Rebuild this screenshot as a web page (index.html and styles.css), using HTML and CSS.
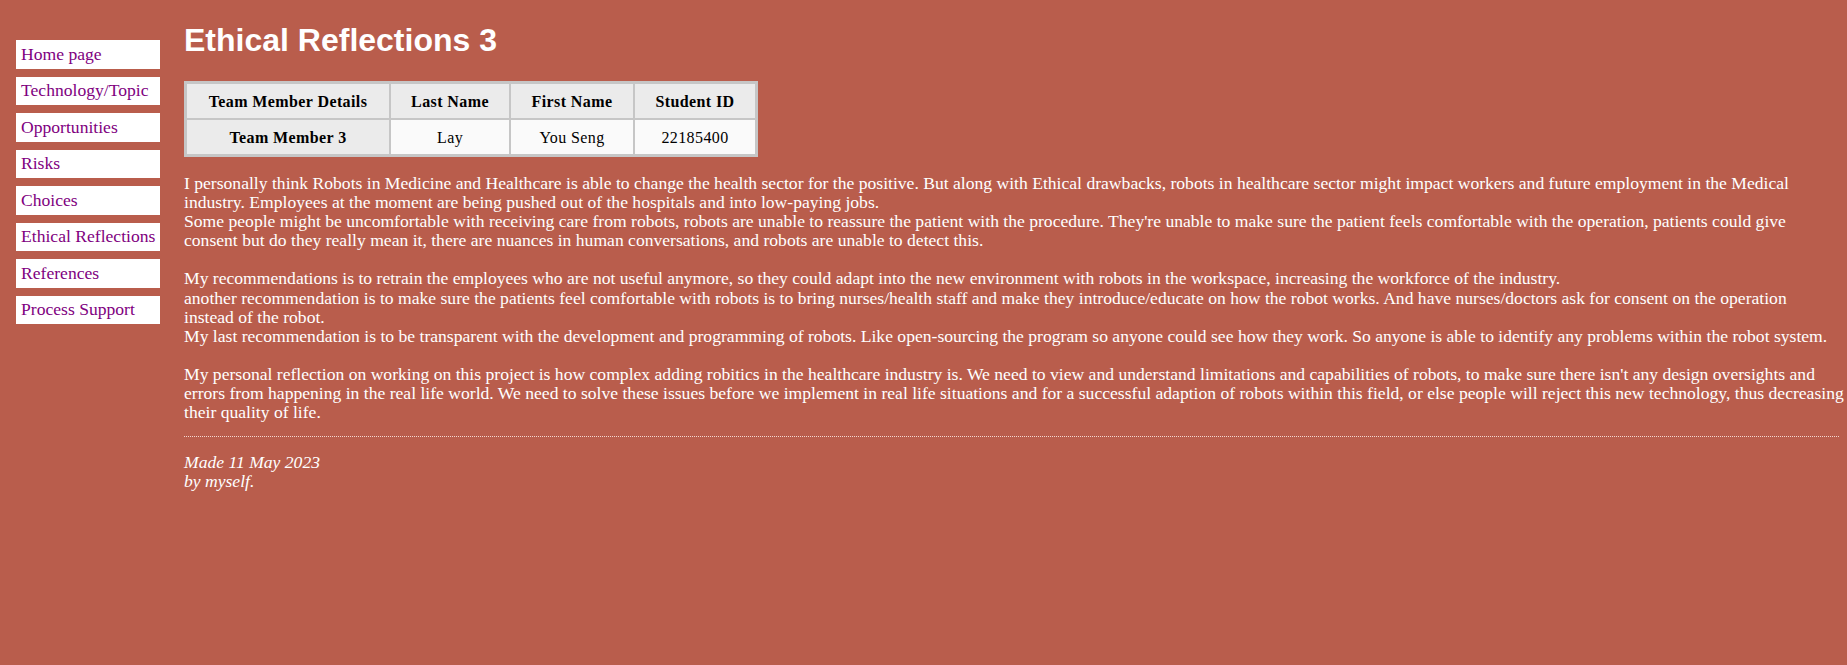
FILE: index.html
```html
<!DOCTYPE html>
<html lang="en">
<head>
<meta charset="utf-8">
<title>Ethical Reflections 3</title>
<link rel="stylesheet" href="styles.css">
</head>
<body>
<div class="page">
  <nav class="sidebar">
    <ul class="navbar">
      <li><a href="#">Home page</a></li>
      <li><a href="#">Technology/Topic</a></li>
      <li><a href="#">Opportunities</a></li>
      <li><a href="#">Risks</a></li>
      <li><a href="#">Choices</a></li>
      <li><a href="#">Ethical Reflections</a></li>
      <li><a href="#">References</a></li>
      <li><a href="#">Process Support</a></li>
    </ul>
  </nav>
  <main class="content">
    <h1 class="title">Ethical Reflections 3</h1>
    <table class="team">
      <tr>
        <th class="col-details">Team Member Details</th>
        <th class="col-last">Last Name</th>
        <th class="col-first">First Name</th>
        <th class="col-id">Student ID</th>
      </tr>
      <tr>
        <th>Team Member 3</th>
        <td>Lay</td>
        <td>You Seng</td>
        <td>22185400</td>
      </tr>
    </table>
    <p class="text">I personally think Robots in Medicine and Healthcare is able to change the health sector for the positive. But along with Ethical drawbacks, robots in healthcare sector might impact workers and future employment in the Medical<br>industry. Employees at the moment are being pushed out of the hospitals and into low-paying jobs.<br>Some people might be uncomfortable with receiving care from robots, robots are unable to reassure the patient with the procedure. They're unable to make sure the patient feels comfortable with the operation, patients could give<br>consent but do they really mean it, there are nuances in human conversations, and robots are unable to detect this.<br><br>My recommendations is to retrain the employees who are not useful anymore, so they could adapt into the new environment with robots in the workspace, increasing the workforce of the industry.<br>another recommendation is to make sure the patients feel comfortable with robots is to bring nurses/health staff and make they introduce/educate on how the robot works. And have nurses/doctors ask for consent on the operation<br>instead of the robot.<br>My last recommendation is to be transparent with the development and programming of robots. Like open-sourcing the program so anyone could see how they work. So anyone is able to identify any problems within the robot system.<br><br>My personal reflection on working on this project is how complex adding robitics in the healthcare industry is. We need to view and understand limitations and capabilities of robots, to make sure there isn't any design oversights and<br>errors from happening in the real life world. We need to solve these issues before we implement in real life situations and for a successful adaption of robots within this field, or else people will reject this new technology, thus decreasing<br>their quality of life.</p>
    <address class="footer">Made 11 May 2023<br>by myself.</address>
  </main>
</div>
</body>
</html>
```

FILE: styles.css
```css
html, body {
  margin: 0;
  padding: 0;
}

body {
  background-color: #b95d4c;
  color: #ffffff;
  font-family: "Liberation Serif", "Times New Roman", serif;
  font-size: 17.6px;
  line-height: 19.1px;
}

.page {
  display: flex;
  align-items: flex-start;
  padding: 0 8px 8px 16px;
}

.sidebar {
  flex: 0 0 144px;
  width: 144px;
  margin-right: 24px;
  padding-top: 32px;
}

.navbar {
  list-style: none;
  margin: 0;
  padding: 0;
}

.navbar li {
  background: #ffffff;
  margin: 8px 0;
  padding: 4.8px 5px;
  line-height: 18.9px;
  white-space: nowrap;
}

.navbar a {
  color: #800080;
  text-decoration: none;
}

.content {
  flex: 1 1 auto;
  min-width: 0;
}

.title {
  font-family: "Liberation Sans", Arial, sans-serif;
  font-weight: bold;
  font-size: 32px;
  line-height: 37px;
  margin: 22px 0 22px;
  color: #ffffff;
}

.team {
  border: 2px solid #c6c6c6;
  border-spacing: 0;
  color: #000000;
  font-size: 16px;
  line-height: 17px;
  letter-spacing: 0.4px;
}

.team th,
.team td {
  border: 1px solid #c6c6c6;
  padding: 8.5px 20px;
  text-align: center;
}

.team th {
  background: #ebebeb;
  font-weight: bold;
}

.team td {
  background: #fafafa;
}

.team .col-details { width: 162px; }
.team .col-last { width: 78px; }
.team .col-first { width: 82px; }
.team .col-id { width: 80px; }

.text {
  margin: 17px 0 13.5px;
  white-space: nowrap;
}

.footer {
  margin-top: 13.5px;
  padding-top: 16px;
  border-top: 1px dotted #f3d7d1;
  font-style: italic;
}
```
